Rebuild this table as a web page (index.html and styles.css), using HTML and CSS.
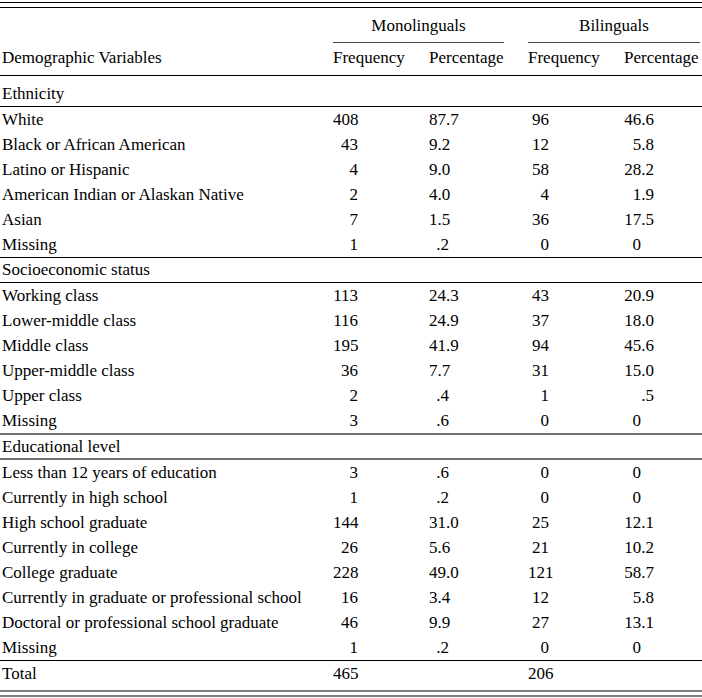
FILE: index.html
```html
<!DOCTYPE html>
<html>
<head>
<meta charset="utf-8">
<link rel="stylesheet" href="styles.css">
</head>
<body>
<div class="tbl">
  <div class="rule-double"></div>
  <div class="row group-row">
    <div></div>
    <div class="grp">Monolinguals</div>
    <div class="grp grp-last">Bilinguals</div>
  </div>
  <div class="row head-row">
    <div class="lbl">Demographic Variables</div>
    <div>Frequency</div>
    <div>Percentage</div>
    <div>Frequency</div>
    <div>Percentage</div>
  </div>

  <div class="sect sect-first">Ethnicity</div>
  <div class="row data"><div class="lbl">White</div><div class="f1">408</div><div class="p1">87.7</div><div class="f2">96</div><div class="p2">46.6</div></div>
  <div class="row data"><div class="lbl">Black or African American</div><div class="f1">43</div><div class="p1">9.2</div><div class="f2">12</div><div class="p2">5.8</div></div>
  <div class="row data"><div class="lbl">Latino or Hispanic</div><div class="f1">4</div><div class="p1">9.0</div><div class="f2">58</div><div class="p2">28.2</div></div>
  <div class="row data"><div class="lbl">American Indian or Alaskan Native</div><div class="f1">2</div><div class="p1">4.0</div><div class="f2">4</div><div class="p2">1.9</div></div>
  <div class="row data"><div class="lbl">Asian</div><div class="f1">7</div><div class="p1">1.5</div><div class="f2">36</div><div class="p2">17.5</div></div>
  <div class="row data"><div class="lbl">Missing</div><div class="f1">1</div><div class="p1">.2</div><div class="f2">0</div><div class="p2 int">0</div></div>

  <div class="sect">Socioeconomic status</div>
  <div class="row data"><div class="lbl">Working class</div><div class="f1">113</div><div class="p1">24.3</div><div class="f2">43</div><div class="p2">20.9</div></div>
  <div class="row data"><div class="lbl">Lower-middle class</div><div class="f1">116</div><div class="p1">24.9</div><div class="f2">37</div><div class="p2">18.0</div></div>
  <div class="row data"><div class="lbl">Middle class</div><div class="f1">195</div><div class="p1">41.9</div><div class="f2">94</div><div class="p2">45.6</div></div>
  <div class="row data"><div class="lbl">Upper-middle class</div><div class="f1">36</div><div class="p1">7.7</div><div class="f2">31</div><div class="p2">15.0</div></div>
  <div class="row data"><div class="lbl">Upper class</div><div class="f1">2</div><div class="p1">.4</div><div class="f2">1</div><div class="p2">.5</div></div>
  <div class="row data"><div class="lbl">Missing</div><div class="f1">3</div><div class="p1">.6</div><div class="f2">0</div><div class="p2 int">0</div></div>

  <div class="sect sect-tall">Educational level</div>
  <div class="row data"><div class="lbl">Less than 12 years of education</div><div class="f1">3</div><div class="p1">.6</div><div class="f2">0</div><div class="p2 int">0</div></div>
  <div class="row data"><div class="lbl">Currently in high school</div><div class="f1">1</div><div class="p1">.2</div><div class="f2">0</div><div class="p2 int">0</div></div>
  <div class="row data"><div class="lbl">High school graduate</div><div class="f1">144</div><div class="p1">31.0</div><div class="f2">25</div><div class="p2">12.1</div></div>
  <div class="row data"><div class="lbl">Currently in college</div><div class="f1">26</div><div class="p1">5.6</div><div class="f2">21</div><div class="p2">10.2</div></div>
  <div class="row data"><div class="lbl">College graduate</div><div class="f1">228</div><div class="p1">49.0</div><div class="f2">121</div><div class="p2">58.7</div></div>
  <div class="row data"><div class="lbl">Currently in graduate or professional school</div><div class="f1">16</div><div class="p1">3.4</div><div class="f2">12</div><div class="p2">5.8</div></div>
  <div class="row data"><div class="lbl">Doctoral or professional school graduate</div><div class="f1">46</div><div class="p1">9.9</div><div class="f2">27</div><div class="p2">13.1</div></div>
  <div class="row data"><div class="lbl">Missing</div><div class="f1">1</div><div class="p1">.2</div><div class="f2">0</div><div class="p2 int">0</div></div>

  <div class="row data total"><div class="lbl">Total</div><div class="f1">465</div><div class="p1"></div><div class="f2">206</div><div class="p2"></div></div>
  <div class="rule-bottom"></div>
</div>
</body>
</html>
```

FILE: styles.css
```css
html, body {
  margin: 0;
  padding: 0;
  background: #fff;
}
body {
  font-family: "Liberation Serif", "Times New Roman", serif;
  font-size: 17px;
  color: #000;
}
.tbl {
  width: 702px;
  padding-top: 2px;
}
.rule-double {
  height: 4px;
  border-top: 1px solid #000;
  border-bottom: 1px solid #000;
}
.row {
  display: grid;
  grid-template-columns: 309px 72px 75px 72px 78px;
  column-gap: 24px;
  line-height: 25px;
  white-space: nowrap;
}
.lbl {
  padding-left: 2px;
}
.group-row {
  padding-top: 5px;
}
.grp {
  grid-column: span 2;
  text-align: center;
  padding-bottom: 4px;
  border-bottom: 1px solid #444;
}
.grp-last {
  margin-right: 2px;
}
.head-row {
  padding-top: 2px;
  padding-bottom: 5px;
  border-bottom: 1px solid #000;
}
.sect {
  padding-left: 2px;
  line-height: 24px;
  border-top: 1px solid #000;
  border-bottom: 1px solid #000;
}
.sect-first {
  border-top: 0;
  padding-top: 5px;
  line-height: 25px;
}
.sect-tall {
  border-top: 2px solid #707070;
  border-bottom: 2px solid #707070;
  line-height: 23px;
}
.data {
  height: 25px;
}
.f1, .p1, .f2, .p2 {
  text-align: right;
}
.f1 { padding-right: 47px; }
.p1 { padding-right: 55px; }
.f2 { padding-right: 51px; }
.p2 { padding-right: 48px; }
.p2.int { padding-right: 61px; }
.total {
  border-top: 1px solid #000;
  height: 30px;
  box-sizing: border-box;
}
.rule-bottom {
  height: 3px;
  border-top: 2px solid #808080;
  border-bottom: 2px solid #808080;
}
```
